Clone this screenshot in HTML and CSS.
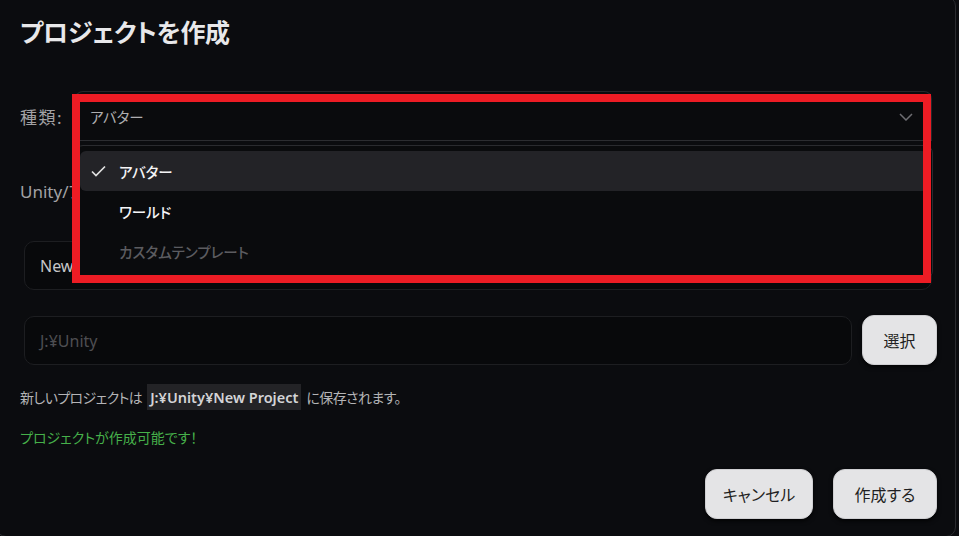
FILE: index.html
```html
<!DOCTYPE html>
<html lang="ja">
<head>
<meta charset="utf-8">
<link rel="stylesheet" href="styles.css">
</head>
<body>
<div class="dialog">
  <h1 class="title">プロジェクトを作成</h1>

  <div class="kind-row">
    <span class="label kind-label">種類:</span>
    <div class="select-wrap">
      <div class="select">
        <span class="select-value">アバター</span>
        <svg class="chevron" width="14" height="8" viewBox="0 0 14 8"><path d="M1 1 L7 7 L13 1" fill="none" stroke="#6e6e72" stroke-width="1.5"/></svg>
      </div>
      <div class="menu">
        <div class="item active">
          <svg class="check" width="15" height="12" viewBox="0 0 15 12"><path d="M1 6.5 L5 10.5 L14 1.5" fill="none" stroke="#e0e0e0" stroke-width="1.7"/></svg>
          <span>アバター</span>
        </div>
        <div class="item"><span>ワールド</span></div>
        <div class="item disabled"><span>カスタムテンプレート</span></div>
      </div>
    </div>
  </div>

  <div class="label sub-label">Unity/プロジェクト名:</div>

  <div class="field name-field">New Project</div>

  <div class="path-row">
    <div class="field path-field">J:¥Unity</div>
    <button class="btn btn-select">選択</button>
  </div>

  <p class="note">新しいプロジェクトは <code class="chip">J:¥Unity¥New Project</code> に保存されます。</p>

  <p class="ok">プロジェクトが作成可能です！</p>

  <div class="actions">
    <button class="btn btn-cancel">キャンセル</button>
    <button class="btn btn-create">作成する</button>
  </div>
</div>
<div class="highlight"></div>
</body>
</html>
```

FILE: styles.css
```css
* { box-sizing: border-box; }

html, body {
  margin: 0;
  padding: 0;
  background: #0b0c0f;
  overflow: hidden;
}

body {
  width: 959px;
  height: 536px;
  position: relative;
  font-family: "Noto Sans", "Noto Sans CJK JP", sans-serif;
  font-feature-settings: "palt";
  color: #a6a6a8;
}

.dialog {
  margin: -4px 0 0 -4px;
  width: 960px;
  height: 541px;
  border: 1px solid #2a2b2f;
  border-radius: 10px;
  background: #0b0c0f;
  padding: 19px 18px 0 23px;
  display: flex;
  flex-direction: column;
}

.title {
  margin: 0;
  font-size: 25px;
  line-height: 32px;
  font-weight: 700;
  color: #e8e8ea;
  letter-spacing: -0.3px;
}

.kind-row {
  margin-top: 43px;
  display: flex;
  align-items: center;
  height: 50px;
}

.label {
  font-size: 17px;
  color: #a2a2a4;
}

.kind-label {
  width: 55px;
  flex: none;
  letter-spacing: 1.5px;
}

.select-wrap {
  position: relative;
  flex: 1;
  height: 50px;
  margin-right: 5px;
}

.select {
  height: 50px;
  border: 1px solid #26272b;
  border-bottom-color: #2c2d31;
  border-radius: 8px 8px 0 0;
  background: #0a0b0d;
  display: flex;
  align-items: center;
  padding: 0 18px 0 14px;
}

.select-value {
  flex: 1;
  font-size: 14.5px;
  color: #aeaeb0;
}

.chevron { margin-top: 2px; }

.menu {
  position: absolute;
  left: 0;
  right: -1px;
  top: 54px;
  height: 134px;
  border: 1px solid #2a2b2f;
  border-radius: 8px;
  background: #0a0b0d;
  padding: 5px 4px;
  z-index: 2;
}

.item {
  height: 40px;
  display: flex;
  align-items: center;
  padding-left: 39px;
  position: relative;
  font-size: 14.5px;
  font-weight: 500;
  color: #f4f4f6;
  border-radius: 6px;
}

.item.active { background: #232327; }

.item.disabled { color: #5c5c60; }

.check {
  position: absolute;
  left: 11px;
  top: 14px;
}

.sub-label {
  margin-top: 40px;
  line-height: 22px;
}

.field {
  height: 49px;
  border: 1px solid #1d1e21;
  border-radius: 10px;
  background: #08090b;
  display: flex;
  align-items: center;
  padding: 0 15px;
  font-size: 16px;
}

.name-field {
  margin: 38px 5px 0 4px;
  color: #c6c6c8;
}

.path-row {
  margin-top: 26px;
  display: flex;
  gap: 10px;
  margin-left: 4px;
  height: 49px;
}

.path-field {
  flex: 1;
  color: #4e4e52;
}

.btn {
  font-family: "Noto Sans", "Noto Sans CJK JP", sans-serif;
  font-feature-settings: "palt";
  background: #e4e4e6;
  color: #1f1f22;
  border: 1px solid #cfcfd2;
  border-radius: 12px;
  font-size: 16px;
  box-shadow: 0 2px 4px rgba(0, 0, 0, 0.8);
  padding: 0;
  height: 50px;
  cursor: pointer;
}

.btn-select {
  width: 75px;
  margin-top: -1px;
}

.note {
  margin: 19px 0 0;
  line-height: 26px;
  font-size: 14px;
  letter-spacing: -0.6px;
  color: #b4b4b6;
}

.chip {
  font-family: "Noto Sans", "Noto Sans CJK JP", sans-serif;
  font-size: 14.5px;
  font-weight: 600;
  letter-spacing: 0;
  color: #d4d4d6;
  background: #232326;
  display: inline-block;
  padding: 0 3px;
  margin: 0 2px;
  line-height: 26px;
}

.ok {
  margin: 17px 0 0;
  line-height: 20px;
  font-size: 14px;
  color: #46b04a;
}

.actions {
  margin-top: 21px;
  display: flex;
  justify-content: flex-end;
  gap: 20px;
}

.btn-cancel { width: 108px; }

.btn-create { width: 104px; }

.highlight {
  position: absolute;
  left: 72px;
  top: 94px;
  width: 859px;
  height: 189px;
  border: 8px solid #ed1c24;
  z-index: 5;
}
```
